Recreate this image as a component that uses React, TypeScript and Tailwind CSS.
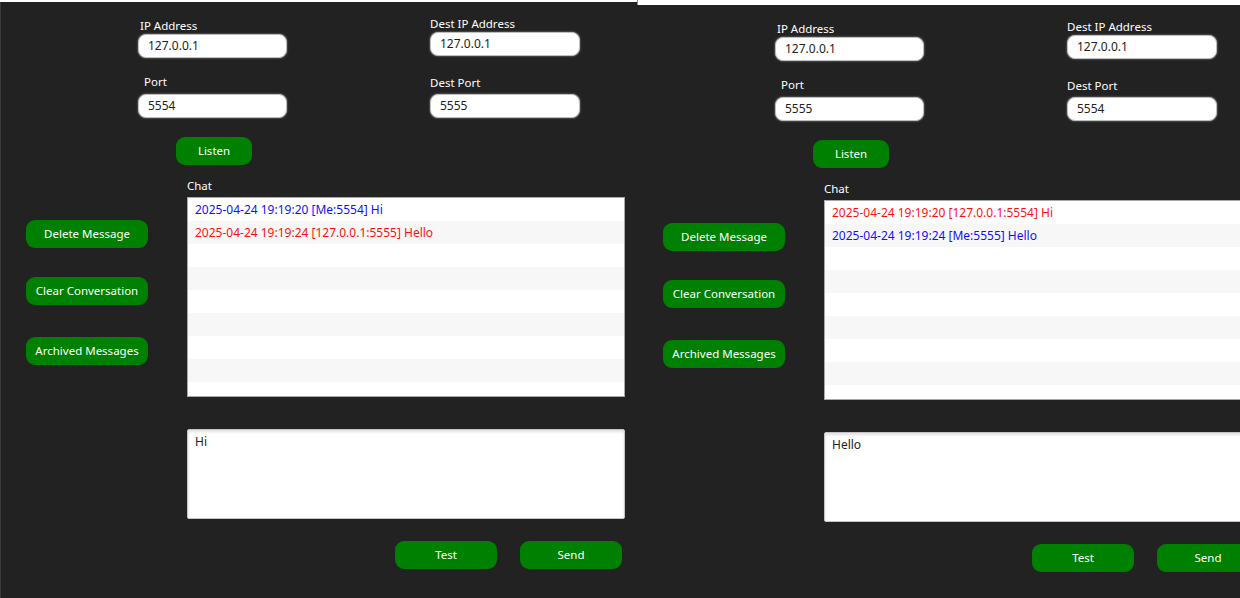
import React from "react";

type Msg = { text: string; me: boolean };

type Peer = {
  ip: string;
  port: string;
  destIp: string;
  destPort: string;
  draft: string;
  messages: Msg[];
  strip: string;
  edge: string;
};

const font = { fontFamily: '"Noto Sans", "Segoe UI", sans-serif' };

const peers: Peer[] = [
  {
    ip: "127.0.0.1",
    port: "5554",
    destIp: "127.0.0.1",
    destPort: "5555",
    draft: "Hi",
    messages: [
      { text: "2025-04-24 19:19:20 [Me:5554] Hi", me: true },
      { text: "2025-04-24 19:19:24 [127.0.0.1:5555] Hello", me: false },
    ],
    strip: "h-[2px]",
    edge: "shadow-[inset_1px_0_0_#3a3a3a]",
  },
  {
    ip: "127.0.0.1",
    port: "5555",
    destIp: "127.0.0.1",
    destPort: "5554",
    draft: "Hello",
    messages: [
      { text: "2025-04-24 19:19:20 [127.0.0.1:5554] Hi", me: false },
      { text: "2025-04-24 19:19:24 [Me:5555] Hello", me: true },
    ],
    strip: "h-[5px] border-l border-[#8a8a8a]",
    edge: "",
  },
];

function Field({ value }: { value: string }) {
  return (
    <div className="h-[24px] w-full rounded-[8px] bg-white border border-[#bdbdbd] shadow-[0_0_2px_#9a9a9a] flex items-center pl-[9px] text-[12px] text-[#222]">
      {value}
    </div>
  );
}

function GreenButton({ label, className = "" }: { label: string; className?: string }) {
  return (
    <button className={`h-[28px] rounded-[9px] bg-[#008000] text-white text-[11.5px] flex items-center justify-center ${className}`}>
      {label}
    </button>
  );
}

function Label({ text, className = "" }: { text: string; className?: string }) {
  return <div className={`h-[15px] leading-[15px] text-[11.5px] text-white ${className}`}>{text}</div>;
}

function ChatWindow({ peer }: { peer: Peer }) {
  const rows = Array.from({ length: 9 }, (_, i) => peer.messages[i]);
  return (
    <div className="w-[637px] shrink-0 flex flex-col h-full">
      <div className={`bg-white ${peer.strip}`} />
      <div className={`flex-1 bg-[#222222] ${peer.edge}`}>
        {/* addresses */}
        <div className="flex pl-[138px]">
          <div className="w-[149px] pt-[16px] flex flex-col">
            <Label text="IP Address" className="pl-[2px]" />
            <div className="mt-[1px]">
              <Field value={peer.ip} />
            </div>
            <Label text="Port" className="mt-[16px] pl-[6px]" />
            <div className="mt-[5px]">
              <Field value={peer.port} />
            </div>
          </div>
          <div className="ml-[143px] w-[150px] pt-[14px] flex flex-col">
            <Label text="Dest IP Address" />
            <div className="mt-[1px]">
              <Field value={peer.destIp} />
            </div>
            <Label text="Dest Port" className="mt-[19px]" />
            <div className="mt-[4px]">
              <Field value={peer.destPort} />
            </div>
          </div>
        </div>

        <GreenButton label="Listen" className="mt-[19px] ml-[176px] w-[76px]" />

        {/* chat area */}
        <div className="flex mt-[13px]">
          <div className="pl-[26px] pt-[42px] flex flex-col w-[148px] shrink-0">
            <GreenButton label="Delete Message" className="w-[122px]" />
            <GreenButton label="Clear Conversation" className="w-[122px] mt-[29px]" />
            <GreenButton label="Archived Messages" className="w-[122px] mt-[32px]" />
          </div>
          <div className="ml-[39px] w-[438px] shrink-0 flex flex-col">
            <Label text="Chat" />
            <div className="mt-[4px] h-[200px] bg-white border border-[#a8a8a8] overflow-hidden">
              {rows.map((m, i) => (
                <div
                  key={i}
                  className={`h-[23px] flex items-center pl-[7px] text-[12px] ${
                    i % 2 === 1 ? "bg-[#f7f7f7]" : "bg-white"
                  } ${m ? (m.me ? "text-[#1010ff]" : "text-[#ff1010]") : ""}`}
                >
                  {m?.text}
                </div>
              ))}
            </div>
            <div className="mt-[32px] h-[90px] bg-white border border-[#c4c4c4] rounded-[2px] shadow-[inset_0_2px_3px_rgba(0,0,0,0.12)] pl-[7px] pt-[4px] text-[12px] leading-[15px] text-[#222]">
              {peer.draft}
            </div>
            <div className="mt-[22px] flex justify-end gap-[23px] pr-[3px]">
              <GreenButton label="Test" className="w-[102px]" />
              <GreenButton label="Send" className="w-[102px]" />
            </div>
          </div>
        </div>
      </div>
    </div>
  );
}

export default function App() {
  return (
    <div className="w-[1240px] h-[598px] overflow-hidden flex bg-[#222222]" style={font}>
      {peers.map((p, i) => (
        <ChatWindow key={i} peer={p} />
      ))}
    </div>
  );
}
